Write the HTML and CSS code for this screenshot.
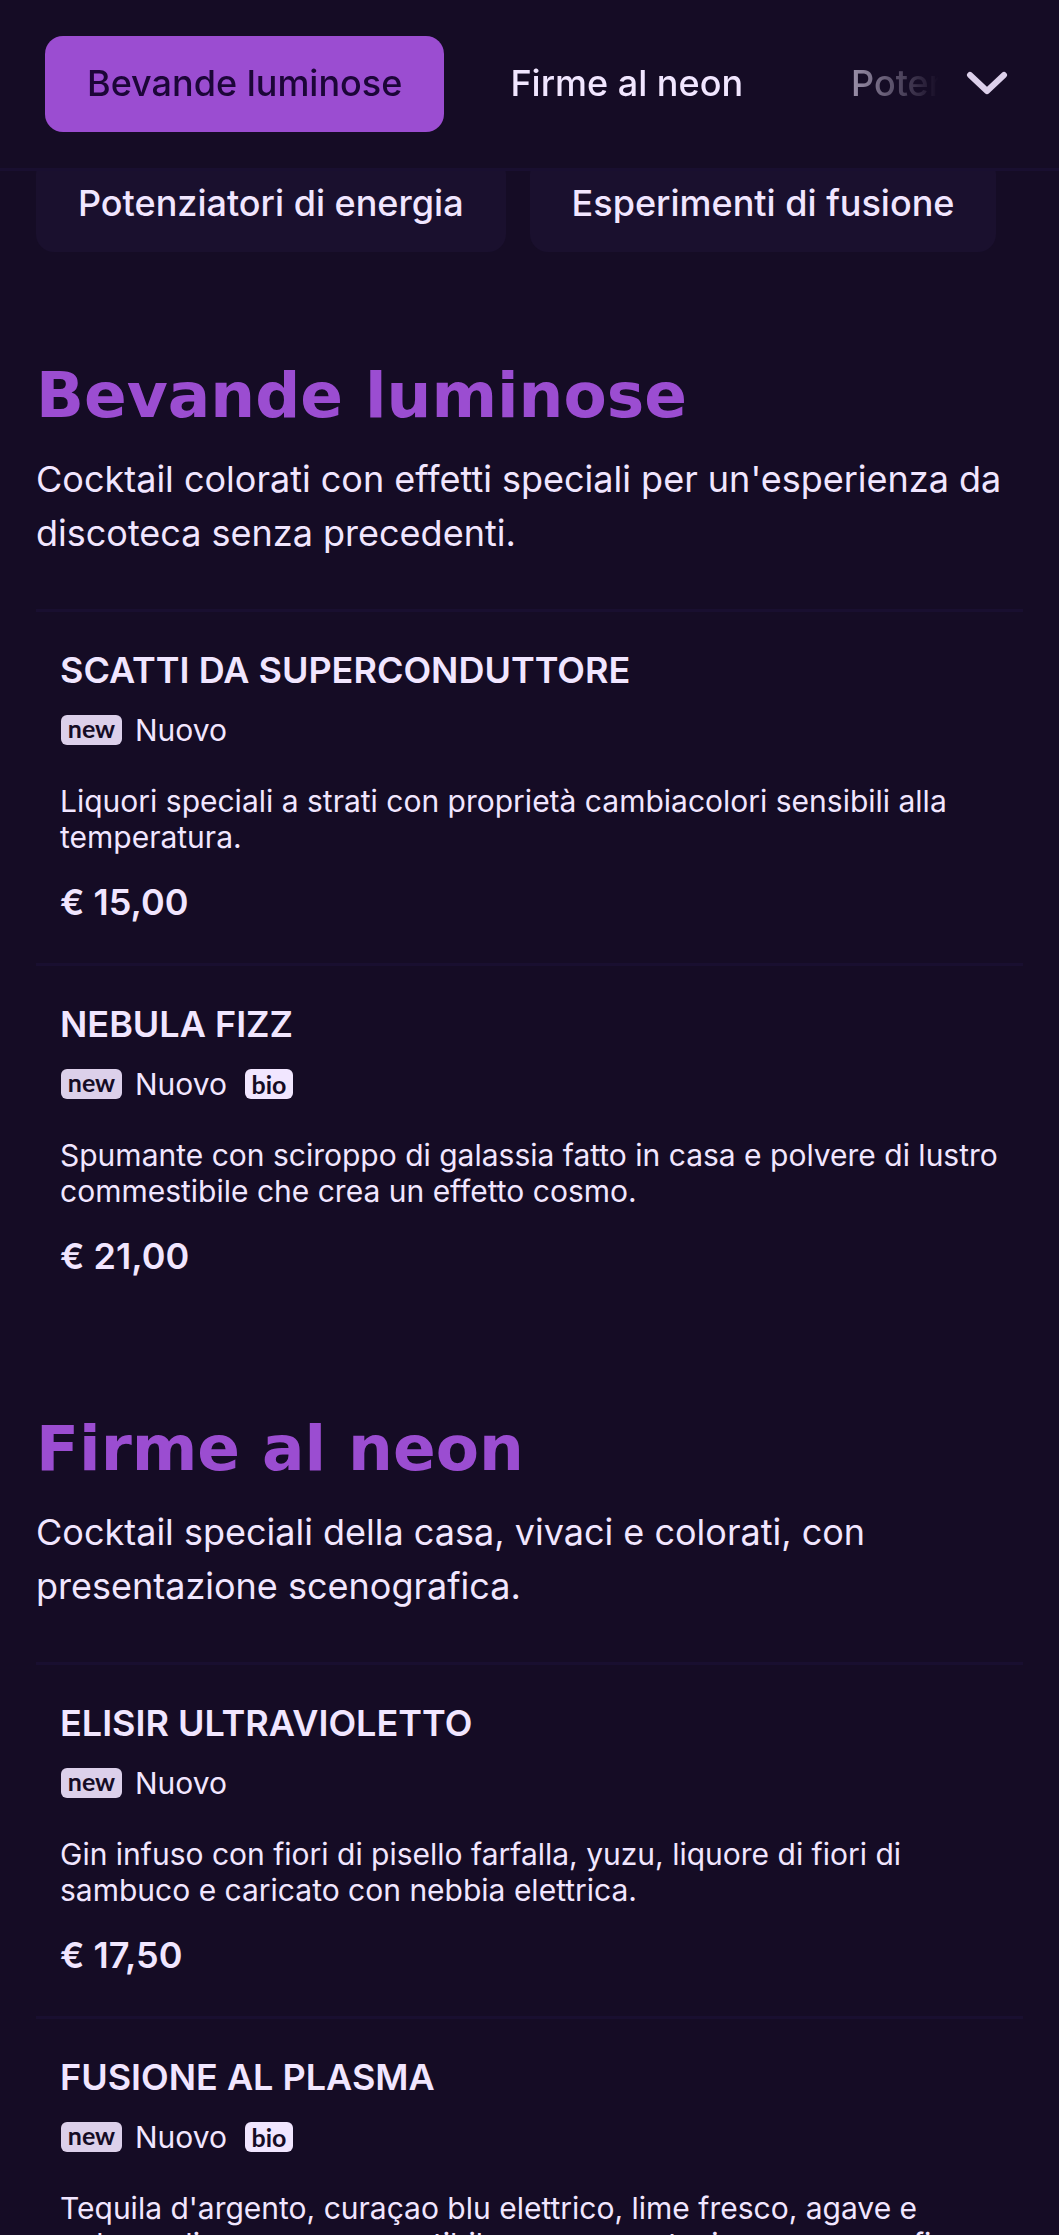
FILE: index.html
```html
<!DOCTYPE html>
<html lang="it">
<head>
<meta charset="utf-8">
<meta name="viewport" content="width=device-width, initial-scale=1">
<title>Menu cocktail</title>
<link rel="stylesheet" href="styles.css">
</head>
<body>
<header class="topbar">
  <nav class="tabs" aria-label="Categorie">
    <a class="tab tab-active" href="#bevande" aria-current="true">Bevande luminose</a>
    <a class="tab" href="#firme">Firme al neon</a>
    <a class="tab" href="#potenziatori">Potenziatori di energia</a>
  </nav>
  <button class="expand" type="button" aria-label="Mostra tutte le categorie">
    <svg class="chevron" viewBox="0 0 42 26" aria-hidden="true"><path d="M4 4 L21 20 L38 4"/></svg>
  </button>
</header>
<main class="menu">
  <nav class="chips" aria-label="Altre categorie">
    <a class="chip" href="#potenziatori">Potenziatori di energia</a>
    <a class="chip" href="#esperimenti">Esperimenti di fusione</a>
  </nav>

  <section class="category" id="bevande">
    <h2 class="title">Bevande luminose</h2>
    <p class="intro">Cocktail colorati con effetti speciali per un'esperienza da discoteca senza precedenti.</p>
    <article class="item">
      <h3 class="name">SCATTI DA SUPERCONDUTTORE</h3>
      <div class="labels"><span class="badge badge-new">new</span><span class="label">Nuovo</span></div>
      <p class="text">Liquori speciali a strati con proprietà cambiacolori sensibili alla temperatura.</p>
      <p class="price">€ 15,00</p>
    </article>
    <article class="item">
      <h3 class="name">NEBULA FIZZ</h3>
      <div class="labels"><span class="badge badge-new">new</span><span class="label">Nuovo</span><span class="badge badge-bio">bio</span></div>
      <p class="text">Spumante con sciroppo di galassia fatto in casa e polvere di lustro commestibile che crea un effetto cosmo.</p>
      <p class="price">€ 21,00</p>
    </article>
  </section>

  <section class="category" id="firme">
    <h2 class="title">Firme al neon</h2>
    <p class="intro">Cocktail speciali della casa, vivaci e colorati, con presentazione scenografica.</p>
    <article class="item">
      <h3 class="name">ELISIR ULTRAVIOLETTO</h3>
      <div class="labels"><span class="badge badge-new">new</span><span class="label">Nuovo</span></div>
      <p class="text">Gin infuso con fiori di pisello farfalla, yuzu, liquore di fiori di sambuco e caricato con nebbia elettrica.</p>
      <p class="price">€ 17,50</p>
    </article>
    <article class="item">
      <h3 class="name">FUSIONE AL PLASMA</h3>
      <div class="labels"><span class="badge badge-new">new</span><span class="label">Nuovo</span><span class="badge badge-bio">bio</span></div>
      <p class="text">Tequila d'argento, curaçao blu elettrico, lime fresco, agave e polvere di cosmo commestibile con presentazione scenografica.</p>
    </article>
  </section>
</main>
</body>
</html>
```
FILE: styles.css
```css
:root {
  --bg: #150c25;
  --panel: #1a102e;
  --line: #190f30;
  --text: #f1e6ff;
  --soft: #dcd0ea;
  --accent: #9b4dd1;
}

* { box-sizing: border-box; }

html { scrollbar-width: none; }

body {
  margin: 0;
  background: var(--bg);
  color: var(--text);
  font-family: Inter, "Liberation Sans", sans-serif;
  font-size: 36px;
  line-height: 54px;
}

h2, h3, p { margin: 0; }

a { color: inherit; text-decoration: none; }

.topbar {
  position: sticky;
  top: 0;
  z-index: 1;
  display: flex;
  height: 171px;
  padding: 36px 24px 36px 45px;
  background: var(--bg);
  border-bottom: 3px solid var(--line);
}

.tabs {
  display: flex;
  flex: 1;
  gap: 24px;
  align-items: flex-start;
  overflow: hidden;
  -webkit-mask-image: linear-gradient(to left, transparent 0, #000 144px);
  mask-image: linear-gradient(to left, transparent 0, #000 144px);
}

.tab, .chip {
  flex: none;
  padding: 20px 42px 22px;
  border-radius: 18px;
  font-weight: 500;
  white-space: nowrap;
}

.tab-active {
  background: var(--accent);
  color: #1c0638;
}

.expand {
  display: flex;
  align-items: center;
  justify-content: center;
  width: 96px;
  height: 96px;
  padding: 0;
  border: 0;
  background: none;
}

.chevron {
  width: 42px;
  height: 26px;
  fill: none;
  stroke: var(--soft);
  stroke-width: 6;
  stroke-linecap: round;
  stroke-linejoin: round;
}

.menu { padding: 0 36px; }

.chips {
  display: flex;
  gap: 24px;
  margin-top: -15px;
}

.chip { background: var(--panel); }

.category { padding-top: 108px; }

.category + .category { padding-top: 96px; }

.title {
  color: var(--accent);
  font-family: "DejaVu Sans", sans-serif;
  font-size: 63px;
  font-weight: 700;
  line-height: 72px;
}

.intro {
  margin: 20px 0 49px;
}

.item {
  padding: 34px 24px;
  border-top: 3px solid var(--line);
}

.name {
  font-size: 36px;
  font-weight: 600;
  line-height: 48px;
}

.labels {
  display: flex;
  align-items: center;
  margin-top: 13px;
  padding-left: 1px;
  height: 45px;
  font-size: 30px;
  line-height: 36px;
}

.badge {
  height: 30px;
  border-radius: 6px;
  color: var(--bg);
  font-family: Lato, "Open Sans", sans-serif;
  font-size: 25px;
  font-weight: 700;
  text-align: center;
}

.badge-new {
  width: 61px;
  line-height: 26px;
  background: var(--soft);
}

.badge-bio {
  width: 48px;
  line-height: 30px;
  background: var(--text);
}

.label { margin: 0 18px 0 13px; }

.text {
  margin-top: 31px;
  font-size: 30px;
  line-height: 36px;
}

.price {
  margin-top: 20px;
  font-weight: 600;
}
```
